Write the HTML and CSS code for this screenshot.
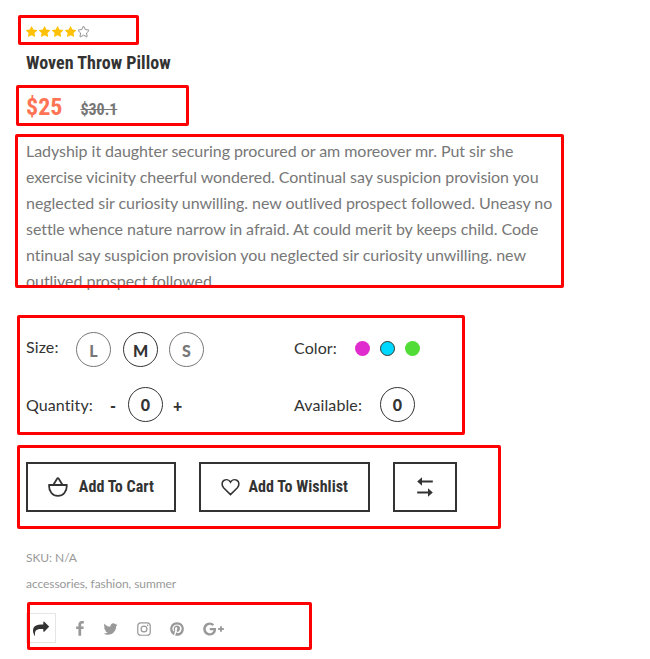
FILE: index.html
```html
<!DOCTYPE html>
<html lang="en">
<head>
<meta charset="utf-8">
<title>Woven Throw Pillow</title>
<link rel="stylesheet" href="styles.css">
</head>
<body>
<svg class="defs" width="0" height="0">
  <symbol id="star" viewBox="64 0 1664 1792"><path d="M1728 647q0 22-26 48l-363 354 86 500q1 7 1 20 0 21-10.500 35.500t-30.500 14.500q-19 0-40-12l-449-236-449 236q-22 12-40 12-21 0-31.500-14.500t-10.500-35.500q0-6 2-20l86-500-364-354q-25-27-25-48 0-37 56-46l502-73 225-455q19-41 49-41t49 41l225 455 502 73q56 9 56 46z"/></symbol>
</svg>
<main class="product">
  <div class="section rating">
    <svg class="star"><use href="#star"/></svg>
    <svg class="star"><use href="#star"/></svg>
    <svg class="star"><use href="#star"/></svg>
    <svg class="star"><use href="#star"/></svg>
    <svg class="star empty"><use href="#star"/></svg>
  </div>
  <h1 class="title"><span class="cond">Woven Throw Pillow</span></h1>
  <div class="section price">
    <span class="now cond">$25</span>
    <del class="was cond">$30.1</del>
  </div>
  <p class="section description">Ladyship it daughter securing procured or am moreover mr. Put sir she<br>exercise vicinity cheerful wondered. Continual say suspicion provision you<br>neglected sir curiosity unwilling. new outlived prospect followed. Uneasy no<br>settle whence nature narrow in afraid. At could merit by keeps child. Code<br>ntinual say suspicion provision you neglected sir curiosity unwilling. new<br>outlived prospect followed.</p>
  <div class="section options">
    <div class="option sizes"><span class="label">Size:</span><span class="circle muted">L</span><span class="circle">M</span><span class="circle muted">S</span></div>
    <div class="option colors"><span class="label">Color:</span><i class="dot pink"></i><i class="dot cyan"></i><i class="dot green"></i></div>
    <div class="option quantity"><span class="label">Quantity:</span><b class="step minus">-</b><span class="circle">0</span><b class="step plus">+</b></div>
    <div class="option available"><span class="label">Available:</span><span class="circle">0</span></div>
  </div>
  <div class="section actions">
    <button class="btn cart">
      <svg width="20" height="20" viewBox="0 0 20 20"><path d="M.3 8h19.400M1 8.400c0 6.300 3.600 10.600 9 10.600s9-4.300 9-10.600M5.300 8 9 1.900q1-1.500 2 0L14.700 8"/></svg>
      <span class="cond">Add To Cart</span>
    </button>
    <button class="btn wish">
      <svg width="22" height="20" viewBox="0 0 22 20"><path d="M11 18.800 3 10.800C.2 7.500 1 3.800 3.700 2.200 6.400.7 9.500 1.900 11 4.400c1.500-2.500 4.600-3.700 7.300-2.200C21 3.800 21.800 7.500 19 10.800z"/></svg>
      <span class="cond">Add To Wishlist</span>
    </button>
    <button class="btn compare" aria-label="Compare">
      <svg width="16" height="20" viewBox="0 0 16 20"><path d="M4 4.500h11.800M.2 15.500H12"/><path class="solid" d="M.2 4.500 5 .3v8.400zM15.800 15.500 11 11.300v8.400z"/></svg>
    </button>
  </div>
  <p class="meta">SKU: N/A</p>
  <p class="meta">accessories, fashion, summer</p>
  <div class="section share">
    <span class="share-box"><svg width="16" height="16" viewBox="0 0 1792 1792"><path d="M1792 640q0 26-19 45l-512 512q-19 19-45 19t-45-19-19-45v-256h-224q-98 0-175.500 6t-154 21.500-133 42.500-105.500 69.500-80 101-48.500 138.500-17.500 181q0 55 5 123 0 6 2.500 23.500t2.500 26.500q0 15-8.500 25t-23.500 10q-16 0-28-17-7-9-13-22t-13.500-30-10.500-24q-127-285-127-451 0-199 53-333 162-403 875-403h224v-256q0-26 19-45t45-19 45 19l512 512q19 19 19 45z"/></svg></span>
    <svg class="social facebook" viewBox="479 0 864 1792"><path d="M1343 12v264h-157q-86 0-116 36t-30 108v189h293l-39 296h-254v759h-306v-759h-255v-296h255v-218q0-186 104-288.500t277-102.500q147 0 228 12z"/></svg>
    <svg class="social twitter" viewBox="108 0 1576 1792"><path d="M1684 408q-67 98-162 167 1 14 1 42 0 130-38 259.500t-115.500 248.500-184.500 210.500-258 146-323 54.500q-271 0-496-145 35 4 78 4 225 0 401-138-105-2-188-64.500t-114-159.500q33 5 61 5 43 0 85-11-112-23-185.500-111.500t-73.500-205.500v-4q68 38 146 41-66-44-105-115t-39-154q0-88 44-163 121 149 294.500 238.500t371.500 99.500q-8-38-8-74 0-134 94.500-228.500t228.500-94.500q140 0 236 102 109-21 205-78-37 115-142 178 93-10 186-50z"/></svg>
    <svg class="social instagram" viewBox="128 0 1536 1792"><rect x="197" y="197" width="1398" height="1398" rx="370"/><circle cx="896" cy="896" r="325"/><circle class="fill" cx="1306" cy="486" r="92"/></svg>
    <svg class="social pinterest" viewBox="128 0 1536 1792"><path d="M1664 896q0 209-103 385.500t-279.500 279.500-385.500 103q-111 0-218-32 59-93 78-164 9-34 54-211 20 39 73 67.500t114 28.500q121 0 216-68.500t147-188.500 52-270q0-114-59.500-214t-172.500-163-255-63q-105 0-196 29t-154.500 77-109 110.500-67 129.500-21.500 134q0 104 40 183t117 111q30 12 38-20 2-7 8-31t8-30q6-23-11-43-51-61-51-151 0-151 104.500-259.500t273.500-108.500q151 0 235.500 82t84.500 213q0 170-68.500 289t-175.500 119q-61 0-98-43.500t-23-104.500q8-35 26.500-93.500t30-103 11.500-75.500q0-50-27-83t-77-33q-62 0-105 57t-43 142q0 73 25 122l-99 418q-17 70-13 177-206-91-333-281t-127-423q0-209 103-385.500t279.500-279.500 385.500-103 385.500 103 279.500 279.500 103 385.500z"/></svg>
    <svg class="social google" viewBox="0 0 2304 1792"><path d="M1437 913q0 208-87 370.500t-248 254-369 91.500q-149 0-285-58t-234-156-156-234-58-285 58-285 156-234 234-156 285-58q286 0 491 192l-199 191q-117-113-292-113-123 0-227.500 62t-165.500 168.500-61 232.500 61 232.500 165.500 168.500 227.500 62q83 0 152.500-23t114.500-57.500 78.500-78.500 49-83 21.500-74h-416v-252h692q12 63 12 122zm867-122v210h-209v209h-210v-209h-209v-210h209v-209h210v209h209z"/></svg>
  </div>
</main>
</body>
</html>
```
FILE: styles.css
```css
* { box-sizing: border-box; }
body { margin: 0; background: #fff; color: #333; font: 16px/26px Lato, "Liberation Sans", sans-serif; }
.defs { position: absolute; }
.product { width: 650px; height: 659px; padding: 15px 0 0 26px; overflow: hidden; }
p, h1 { margin: 0; }
.cond { font-family: "Roboto Condensed", Roboto, sans-serif; font-stretch: 75%; font-weight: 700; white-space: nowrap; }

/* highlight frames drawn over each section */
.section { position: relative; }
.section::after { content: ""; position: absolute; border: 3px solid #f00; border-radius: 2px; }

.rating { display: flex; gap: 1.860px; height: 30px; padding-top: 11px; width: 113px; }
.rating::after { inset: 0 0 0 -8px; }
.star { width: 11.140px; height: 12px; fill: #ffc107; }
.star.empty { fill: none; stroke: #888; stroke-width: 140px; overflow: visible; }

.title { height: 40px; padding-top: 4px; font-size: 18px; line-height: 26px; letter-spacing: .03px; }

.price { display: flex; align-items: baseline; gap: 18px; width: 163px; height: 41px; }
.price::after { inset: 0 0 0 -10px; }
.now { font-size: 24px; line-height: 44px; color: #ff7454; }
.was { font-size: 16px; color: #777; }

.description { width: 538px; height: 154px; margin-top: 8px; padding-top: 4px; color: #777; letter-spacing: -.045px; white-space: nowrap; }
.description::after { inset: 0 0 0 -11px; }

.options { display: grid; grid-template-columns: 268px 1fr; grid-template-rows: 58px 53px; width: 439px; height: 120px; margin-top: 27px; padding-top: 5px; }
.options::after { inset: 0 0 0 -9px; }
.option { display: flex; align-items: center; }
.circle { display: flex; align-items: center; justify-content: center; width: 35px; height: 35px; padding-top: 2px; border: 1px solid #333; border-radius: 50%; font-weight: 900; }
.label { letter-spacing: .1px; }
.sizes .label { width: 50px; margin-top: -5px; }
.sizes .circle { margin-right: 12px; padding-top: 4px; }
.sizes .circle + .circle { margin-right: 11px; }
.circle.muted { border-color: #777; color: #777; }
.colors .label { width: 61px; margin-top: -2px; }
.colors .dot { margin-top: -1px; }
.dot { width: 15px; height: 15px; margin-right: 10px; border-radius: 50%; }
.pink { background: #e02bce; }
.cyan { background: #00d9ff; border: 1px solid #333; }
.green { background: #52dc38; }
.quantity .label { width: 84px; }
.quantity, .available { padding-bottom: 1px; }
.quantity .label, .available .label { padding-top: 2px; }
.step { padding-top: 4px; font-weight: 900; }
.minus { width: 18px; }
.plus { margin-left: 10px; }
.available .label { width: 86px; }

.actions { display: flex; gap: 23px; width: 475px; height: 84px; margin-top: 10px; padding-top: 17px; }
.actions::after { inset: 0 0 0 -9px; }
.btn { display: flex; align-items: center; height: 50px; padding: 0 20px; border: 2px solid #333; background: #fff; color: #333; font-size: 16px; }
.btn .cond { margin-top: -2px; letter-spacing: .05px; }
.btn svg { fill: none; stroke: #333; stroke-width: 1.800; }
.btn .solid { fill: #333; stroke: none; }
.cart { width: 150px; gap: 11px; }
.wish { width: 171px; gap: 8.500px; }
.compare { width: 64px; padding: 0 22px; }

.meta { color: #999; font-size: 12px; line-height: 26px; letter-spacing: -.06px; }
.actions + .meta { margin-top: 16px; }

.share { display: flex; align-items: center; width: 286px; height: 48px; margin-top: 5px; color: #999; }
.share::after { inset: 0 0 0 1px; }
.share-box { display: flex; align-items: center; justify-content: center; width: 30px; height: 30px; margin: 4px 20px 0 0; border: 1px solid #e5e5e5; }
.share-box svg { margin-top: 2px; fill: #333; }
.social { height: 16px; margin-top: 6px; fill: #999; }
.facebook { width: 8px; margin-right: 19px; }
.twitter { width: 15px; margin-right: 19px; }
.instagram { width: 14px; margin-right: 19px; fill: none; stroke: #999; stroke-width: 138px; }
.instagram .fill { fill: #999; stroke: none; }
.pinterest { width: 14px; margin-right: 19px; }
.google { width: 21px; }
```
